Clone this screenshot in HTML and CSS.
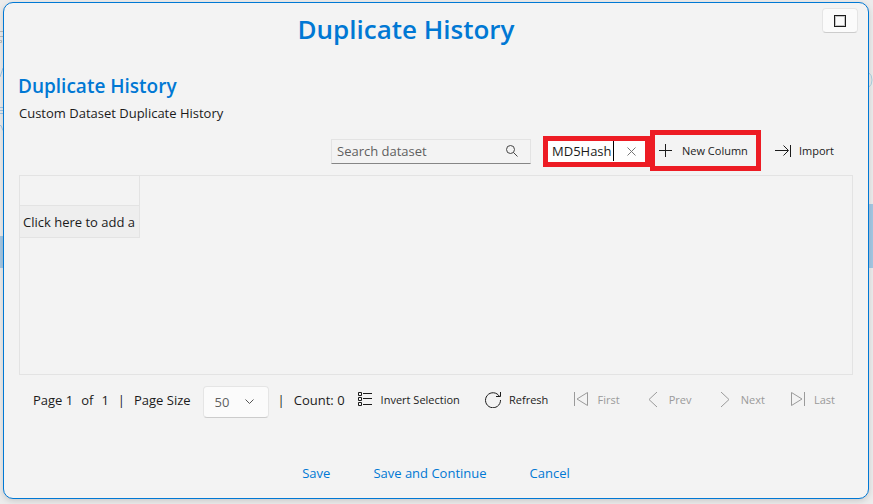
FILE: index.html
```html
<!DOCTYPE html>
<html lang="en">
<head>
    <meta charset="UTF-8">
    <meta name="viewport" content="width=device-width, initial-scale=1.0">
    <title>Duplicate History</title>
    <link rel="stylesheet" href="styles.css">
</head>
<body>
    <!-- page behind the dialog -->
    <div class="backdrop" aria-hidden="true">
        <div class="backdrop-row backdrop-left"></div>
        <div class="backdrop-row backdrop-right"></div>
        <svg class="backdrop-marks-left" width="3" height="140" viewBox="0 0 3 140" fill="none">
            <path d="M0 31.5h3M0 36.5h3M0 40.5h1.5v2H0" stroke="#bbb"/>
            <path d="M0 77l3-9M0 107.5h3M0 110.5h3M0 113.5h3M0 125.5h1l2 5" stroke="#9fc5e4"/>
        </svg>
        <svg class="backdrop-marks-right" width="4" height="16" viewBox="0 0 4 16" fill="none">
            <path d="M0 1q3 2 3 7t-3 7" stroke="#acd0e0"/>
        </svg>
    </div>

    <main class="dialog">
        <header class="dialog-header">
            <h1>Duplicate History</h1>
            <button class="maximize-button" type="button" aria-label="Maximize">
                <svg width="12" height="12" viewBox="0 0 12 12" fill="none">
                    <rect x="0.5" y="0.5" width="11" height="11" stroke="#1b1b1b"/>
                    <rect x="1.5" y="1.5" width="9" height="9" stroke="#c4c4c4"/>
                </svg>
            </button>
        </header>

        <section class="dialog-body">
            <h2>Duplicate History</h2>
            <p class="description">Custom Dataset Duplicate History</p>

            <div class="toolbar">
                <div class="search-box">
                    <input type="text" placeholder="Search dataset" aria-label="Search dataset">
                    <svg width="12" height="12" viewBox="0 0 12 12" fill="none" stroke="#444">
                        <circle cx="4.5" cy="4.5" r="4"/>
                        <path d="M7.5 7.5l4 4"/>
                    </svg>
                </div>
                <div class="column-box">
                    <input type="text" value="MD5Hash" aria-label="Column name">
                    <button type="button" aria-label="Clear">
                        <svg width="9" height="9" viewBox="0 0 9 9" fill="none" stroke="#777">
                            <path d="M0.5 0.5l8 8M8.5 0.5l-8 8"/>
                        </svg>
                    </button>
                </div>
                <button class="tool-button new-column" type="button">
                    <svg width="16" height="16" viewBox="0 0 16 16" fill="none" stroke="#1b1b1b">
                        <path d="M1 7.5h13M7.5 1v13"/>
                    </svg>
                    New Column
                </button>
                <button class="tool-button import" type="button">
                    <svg width="16" height="16" viewBox="0 0 16 16" fill="none" stroke="#1b1b1b">
                        <path d="M0 7.5h13M8.5 2.5l5 5l-5 5M15.5 2v12"/>
                    </svg>
                    Import
                </button>
            </div>

            <div class="grid">
                <table>
                    <thead>
                        <tr><th></th></tr>
                    </thead>
                    <tbody>
                        <tr><td>Click here to add a</td></tr>
                    </tbody>
                </table>
            </div>

            <div class="pager">
                <span class="page-now">Page 1</span>
                <span class="page-of">of</span>
                <span class="page-total">1</span>
                <span class="divider">|</span>
                <label for="page-size">Page Size</label>
                <div class="select-box">
                    <select id="page-size">
                        <option>50</option>
                        <option>100</option>
                    </select>
                    <svg width="9" height="6" viewBox="0 0 9 6" fill="none" stroke="#555">
                        <path d="M0.5 0.5l4 4l4-4"/>
                    </svg>
                </div>
                <span class="divider">|</span>
                <span class="count">Count: 0</span>
                <div class="pager-buttons">
                    <button class="tool-button" type="button">
                        <svg width="16" height="16" viewBox="0 0 16 16" fill="none" stroke="#1b1b1b">
                            <path d="M1.5 0.5h3v3h-3zM1.5 5.5h3v3h-3zM1.5 10.5h3v3h-3zM6 1.5h9M6 6.5h9M6 12.5h9"/>
                        </svg>
                        Invert Selection
                    </button>
                    <button class="tool-button" type="button">
                        <svg width="16" height="16" viewBox="0 0 16 16" fill="none" stroke="#1b1b1b">
                            <path d="M14.5 4.5A7.5 7.5 0 1 0 15.5 8M15.5 0v4.5H11"/>
                        </svg>
                        Refresh
                    </button>
                    <button class="tool-button" type="button" disabled>
                        <svg width="16" height="16" viewBox="0 0 16 16" fill="none" stroke="#9a9a9a">
                            <path d="M1.5 0v14M14.5 0.5v13L4 7z"/>
                        </svg>
                        First
                    </button>
                    <button class="tool-button" type="button" disabled>
                        <svg width="16" height="16" viewBox="0 0 16 16" fill="none" stroke="#9a9a9a">
                            <path d="M12 0L4 7.5l8 7.5"/>
                        </svg>
                        Prev
                    </button>
                    <button class="tool-button" type="button" disabled>
                        <svg width="16" height="16" viewBox="0 0 16 16" fill="none" stroke="#9a9a9a">
                            <path d="M4 0l8 7.5L4 15"/>
                        </svg>
                        Next
                    </button>
                    <button class="tool-button" type="button" disabled>
                        <svg width="16" height="16" viewBox="0 0 16 16" fill="none" stroke="#9a9a9a">
                            <path d="M14.5 0v14M1.5 0.5v13L12 7z"/>
                        </svg>
                        Last
                    </button>
                </div>
            </div>
        </section>

        <footer class="dialog-footer">
            <a href="#save">Save</a>
            <a href="#continue">Save and Continue</a>
            <a href="#cancel">Cancel</a>
        </footer>
    </main>
</body>
</html>
```
FILE: styles.css
```css
* {
    box-sizing: border-box;
}
body {
    margin: 0;
    padding: 2px 4px 5px 3px;
    min-height: 100vh;
    display: flex;
    background-color: #ececec;
    color: #1b1b1b;
    font-family: "Segoe UI", "Open Sans", "Noto Sans", sans-serif;
    font-size: 13px;
    line-height: 20px;
}
button, input, select {
    font: inherit;
    color: inherit;
}
button {
    border: none;
    background: none;
    padding: 0;
    cursor: pointer;
}
svg {
    display: block;
    flex: none;
}

/* backdrop */
.backdrop {
    position: absolute;
    inset: 0;
    overflow: hidden;
}
.backdrop-row {
    position: absolute;
    width: 50%;
    background-color: #a5c8e4;
}
.backdrop-left {
    left: 0;
    top: 236px;
    height: 32px;
}
.backdrop-right {
    right: 0;
    top: 204px;
    height: 64px;
}
.backdrop-marks-left {
    position: absolute;
    left: 0;
    top: 0;
}
.backdrop-marks-right {
    position: absolute;
    right: 0;
    top: 72px;
}

/* dialog */
.dialog {
    position: relative;
    flex: 1;
    display: flex;
    flex-direction: column;
    background-color: #f3f3f3;
    border: 1px solid #0078d4;
    border-radius: 10px;
    box-shadow: 0 2px 6px rgba(0, 0, 0, 0.15);
}
.dialog-header {
    display: flex;
    align-items: flex-start;
    gap: 14px;
    padding: 5px 10px 0 0;
}
h1 {
    flex: 1;
    margin: 0;
    font-size: 26px;
    line-height: 42px;
    font-weight: 600;
    text-align: center;
    color: #0078d4;
}
.maximize-button {
    width: 36px;
    height: 25px;
    display: flex;
    align-items: center;
    justify-content: center;
    background-color: #fbfbfb;
    border: 1px solid #e5e5e5;
    border-bottom-color: #ccc;
    border-radius: 4px;
}
.dialog-body {
    flex: 1;
    display: flex;
    flex-direction: column;
    padding: 22px 15px 0;
}
h2 {
    margin: 0 0 3px -1px;
    font-size: 19px;
    line-height: 28px;
    font-weight: 600;
    color: #0078d4;
}
.description {
    margin: 0;
}

/* toolbar */
.toolbar {
    display: flex;
    align-items: center;
    justify-content: flex-end;
    height: 41px;
    margin: 7px 0 4px;
    padding-right: 18px;
}
.search-box {
    display: flex;
    align-items: center;
    width: 200px;
    height: 25px;
    margin: 1px 12px 0 0;
    padding: 0 12px 0 5px;
    border: 1px solid #e3e3e3;
    border-bottom-color: #868686;
}
.search-box input {
    flex: 1;
    min-width: 0;
    padding: 0;
    border: none;
    outline: none;
    background: none;
}
.search-box input::placeholder {
    color: #5f5f5f;
    opacity: 1;
}
.column-box {
    display: flex;
    align-items: center;
    justify-content: space-between;
    width: 107px;
    height: 31px;
    margin-top: 1px;
    padding: 0 9px 0 4px;
    background-color: #fff;
    border: 5px solid #ed1c24;
}
.column-box input {
    width: 62px;
    padding: 0;
    border: none;
    border-right: 1px solid #000;
    outline: none;
    background: none;
}
.tool-button {
    display: flex;
    align-items: center;
    gap: 8px;
    font-size: 11px;
    white-space: nowrap;
}
.tool-button:disabled {
    color: #9a9a9a;
    cursor: default;
}
.new-column {
    min-width: 111px;
    height: 41px;
    padding: 0 5px 0 3px;
    border: 5px solid #ed1c24;
}
.import {
    min-width: 60px;
    margin-left: 14px;
}

/* data grid */
.grid {
    flex: 1;
    border: 1px solid #e3e3e3;
}
table {
    width: 120px;
    border-collapse: separate;
    border-spacing: 0;
    table-layout: fixed;
}
th, td {
    padding: 0 0 0 3px;
    border: solid #e3e3e3;
    border-width: 0 1px 1px 0;
    text-align: left;
    white-space: nowrap;
    overflow: hidden;
}
th {
    height: 30px;
}
td {
    height: 32px;
    background-color: #eee;
}

/* pager */
.pager {
    display: flex;
    align-items: center;
    height: 50px;
    padding: 0 18px 0 14px;
    white-space: nowrap;
}
.page-of, .page-total {
    margin-left: 8px;
}
.divider {
    margin: 0 9px;
}
.select-box {
    display: grid;
    align-items: center;
    width: 66px;
    margin: 4px 0 0 12px;
}
.select-box select, .select-box svg {
    grid-area: 1 / 1;
}
.select-box select {
    appearance: none;
    width: 100%;
    height: 32px;
    padding: 0 11px;
    color: #5f5f5f;
    background-color: #fbfbfb;
    border: 1px solid #e5e5e5;
    border-bottom-color: #ccc;
    border-radius: 4px;
}
.select-box svg {
    justify-self: end;
    margin-right: 15px;
    pointer-events: none;
}
.pager-buttons {
    flex: 1;
    display: flex;
    justify-content: space-between;
    margin-left: 12px;
}

/* footer */
.dialog-footer {
    display: flex;
    justify-content: center;
    gap: 43px;
    padding: 38px 0 15px;
}
.dialog-footer a {
    color: #0078d4;
    text-decoration: none;
}
```
